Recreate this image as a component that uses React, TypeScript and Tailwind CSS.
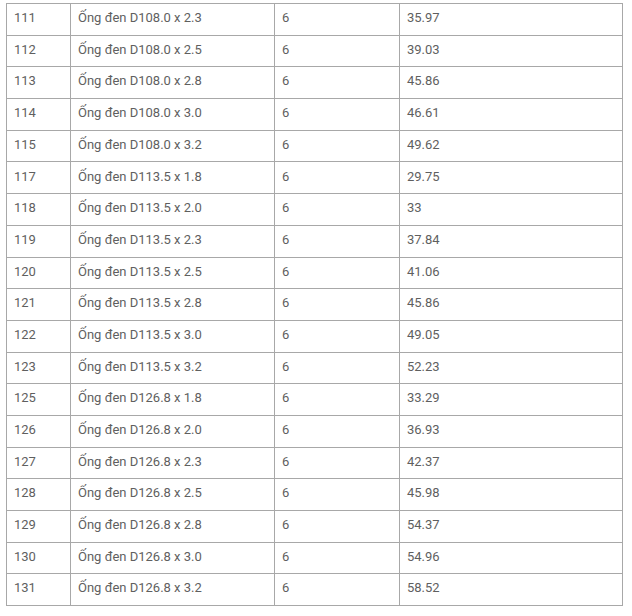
const rows: [string, string, string, string][] = [
  ['111', 'Ống đen D108.0 x 2.3', '6', '35.97'],
  ['112', 'Ống đen D108.0 x 2.5', '6', '39.03'],
  ['113', 'Ống đen D108.0 x 2.8', '6', '45.86'],
  ['114', 'Ống đen D108.0 x 3.0', '6', '46.61'],
  ['115', 'Ống đen D108.0 x 3.2', '6', '49.62'],
  ['117', 'Ống đen D113.5 x 1.8', '6', '29.75'],
  ['118', 'Ống đen D113.5 x 2.0', '6', '33'],
  ['119', 'Ống đen D113.5 x 2.3', '6', '37.84'],
  ['120', 'Ống đen D113.5 x 2.5', '6', '41.06'],
  ['121', 'Ống đen D113.5 x 2.8', '6', '45.86'],
  ['122', 'Ống đen D113.5 x 3.0', '6', '49.05'],
  ['123', 'Ống đen D113.5 x 3.2', '6', '52.23'],
  ['125', 'Ống đen D126.8 x 1.8', '6', '33.29'],
  ['126', 'Ống đen D126.8 x 2.0', '6', '36.93'],
  ['127', 'Ống đen D126.8 x 2.3', '6', '42.37'],
  ['128', 'Ống đen D126.8 x 2.5', '6', '45.98'],
  ['129', 'Ống đen D126.8 x 2.8', '6', '54.37'],
  ['130', 'Ống đen D126.8 x 3.0', '6', '54.96'],
  ['131', 'Ống đen D126.8 x 3.2', '6', '58.52'],
];

export default function App() {
  return (
    <div className="w-[632px] h-[616px] bg-white pt-[3px] pl-[6px] font-['Roboto',sans-serif] text-[13px] text-[#5f5f5f]">
      <table className="w-[617px] border-collapse table-fixed">
        <colgroup>
          <col className="w-[64px]" />
          <col className="w-[204px]" />
          <col className="w-[125px]" />
          <col />
        </colgroup>
        <tbody>
          {rows.map((r) => (
            <tr key={r[0]} className="h-[31.7px]">
              {r.map((c, i) => (
                <td key={i} className="border border-[#a8a8a8] pl-[7px] pr-2 pt-0 pb-[3px] align-middle">
                  {c}
                </td>
              ))}
            </tr>
          ))}
        </tbody>
      </table>
    </div>
  );
}
